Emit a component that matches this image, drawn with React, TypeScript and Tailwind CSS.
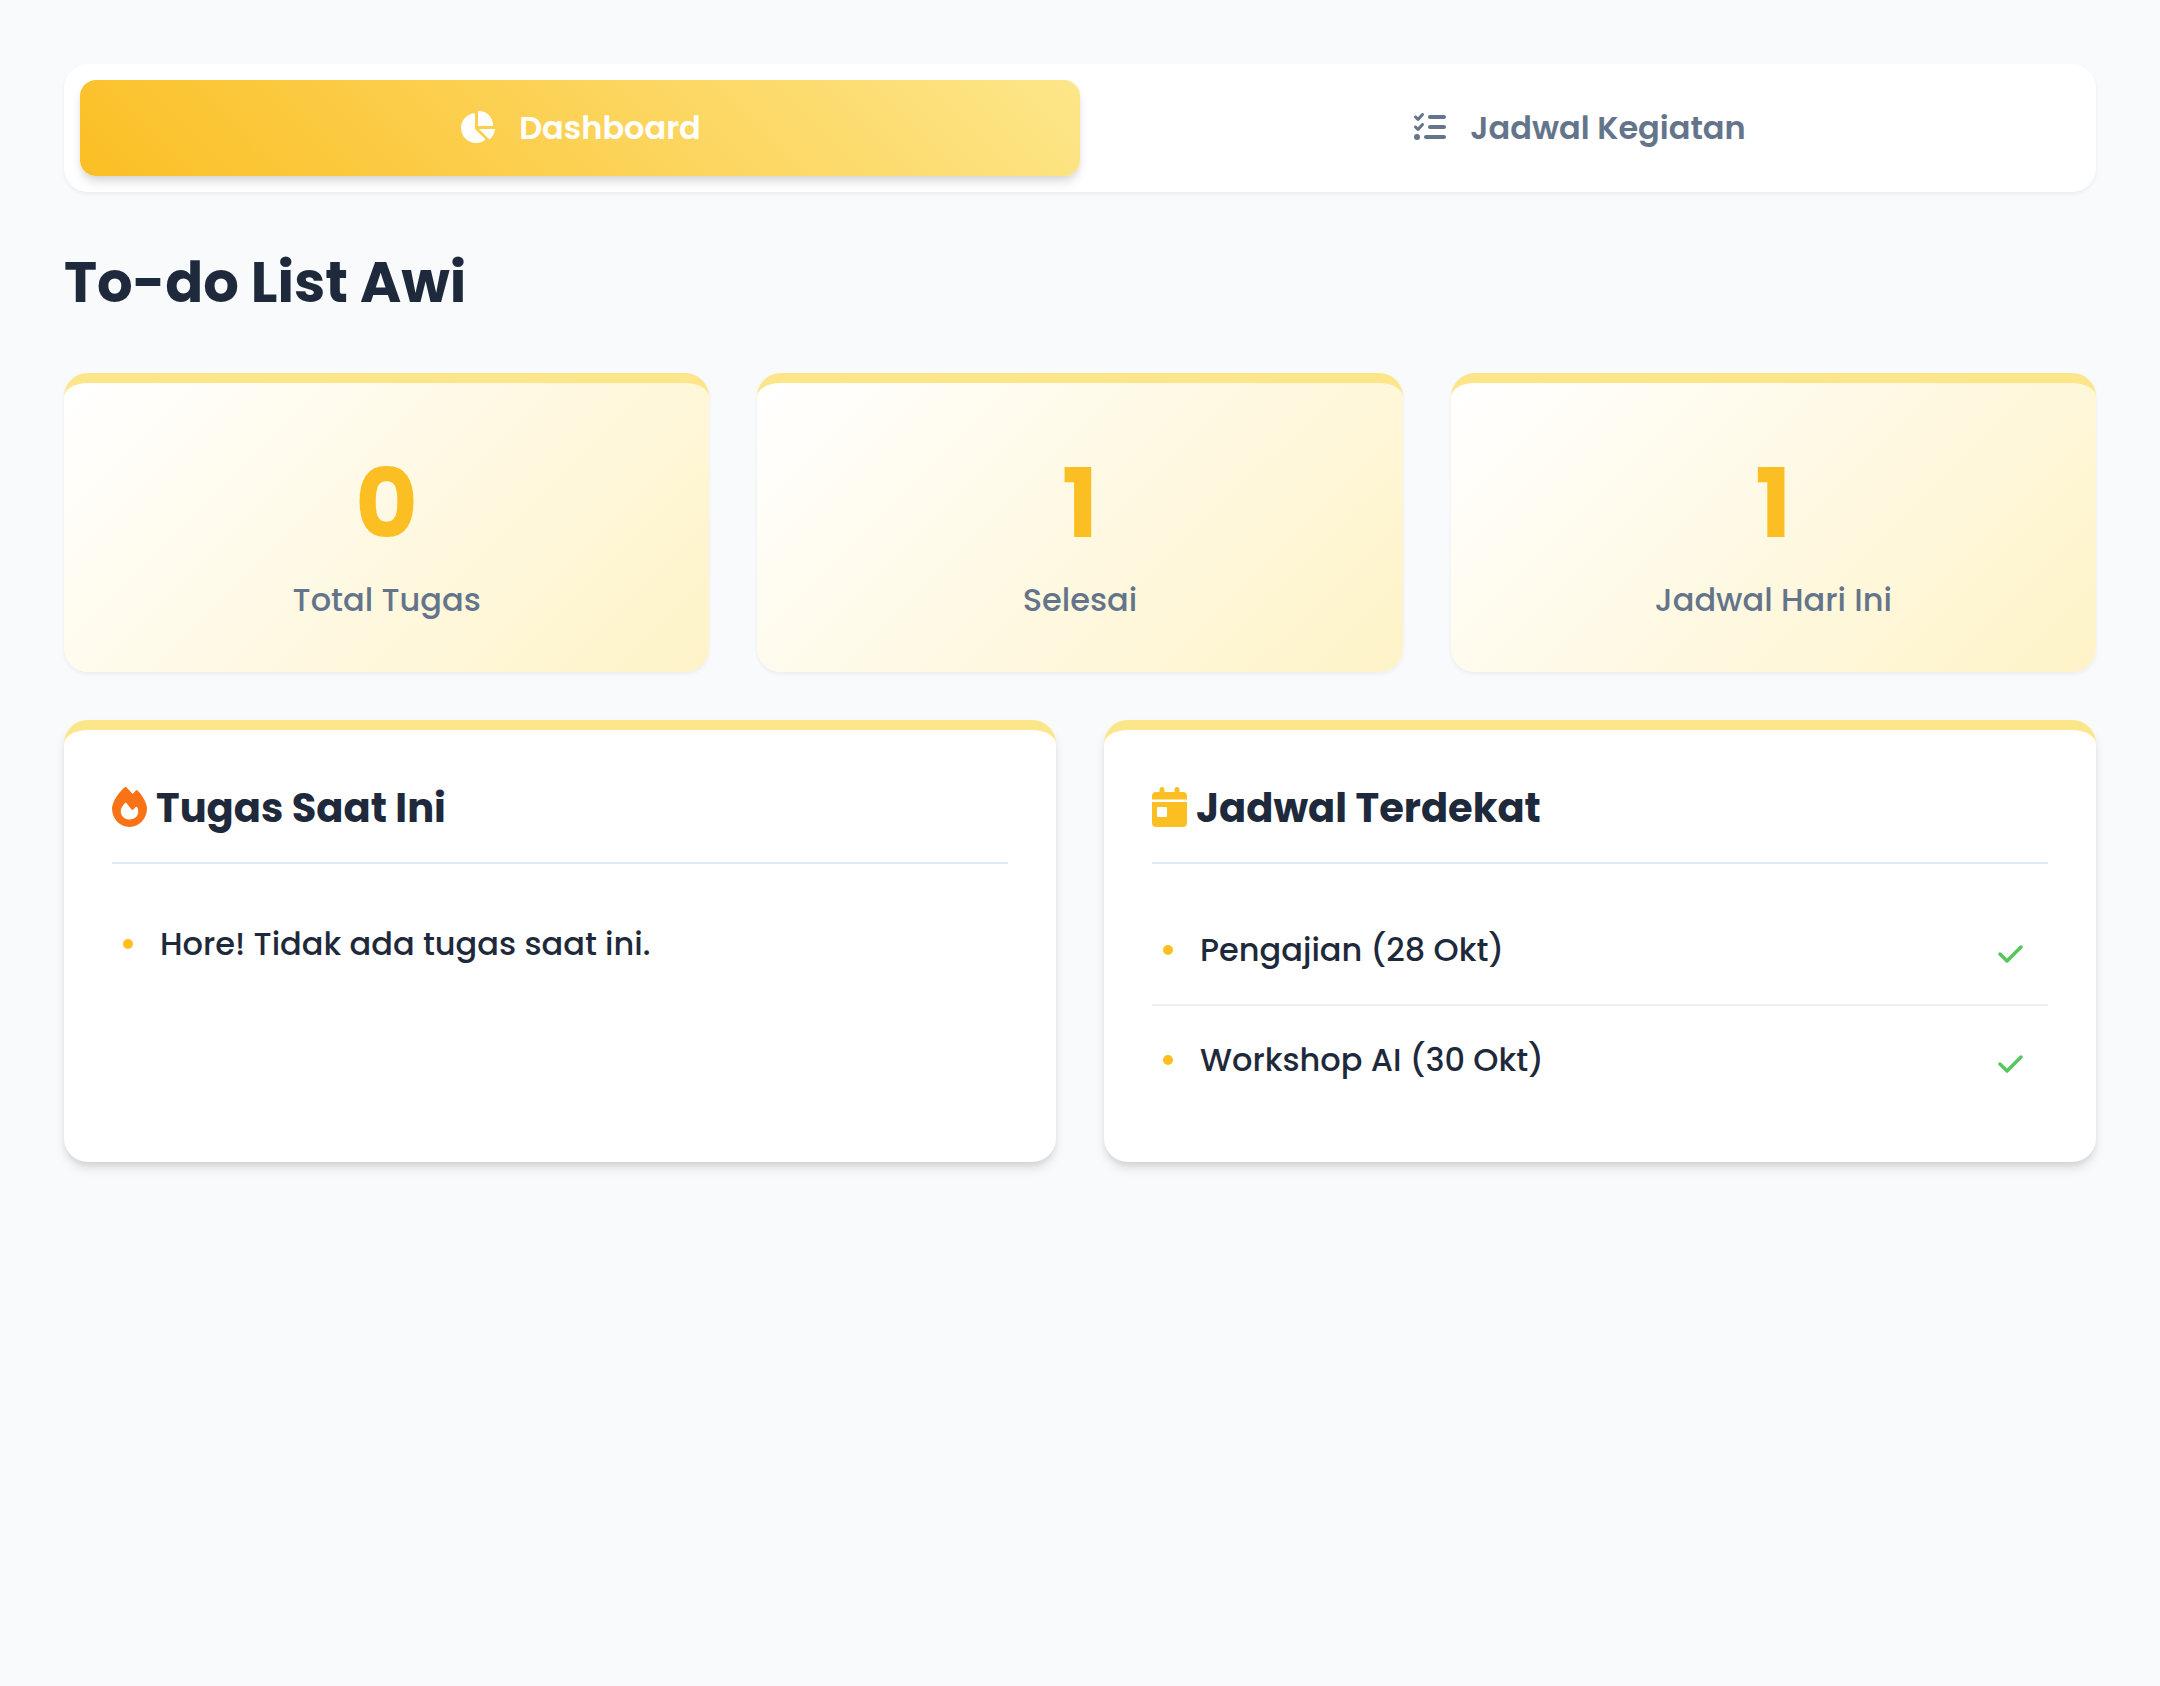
import { useState } from "react";
import type { ReactNode } from "react";
import { FaCalendarDay, FaChartPie, FaCheck, FaFire, FaListCheck } from "react-icons/fa6";

const stats = [
  { value: 0, label: "Total Tugas" },
  { value: 1, label: "Selesai" },
  { value: 1, label: "Jadwal Hari Ini" },
];

const schedule = ["Pengajian (28 Okt)", "Workshop AI (30 Okt)"];

const tabs = [
  { id: "dashboard", label: "Dashboard", icon: <FaChartPie className="mb-[3px] h-8 w-9" aria-hidden="true" /> },
  { id: "jadwal", label: "Jadwal Kegiatan", icon: <FaListCheck className="mb-[3px] size-8" aria-hidden="true" /> },
];

function Panel({ icon, title, children }: { icon: ReactNode; title: string; children: ReactNode }) {
  return (
    <section className="rounded-3xl border-t-[10px] border-[#fde58a] bg-white p-12 shadow-[0_8px_12px_-2px_rgba(0,0,0,0.1),0_4px_8px_-2px_rgba(0,0,0,0.1)]">
      <h2 className="flex items-center gap-[9px] border-b-2 border-[#e2e8f0] pb-6 text-[40px] leading-[60px] font-bold">
        {icon}
        {title}
      </h2>
      <ul className="mt-8 font-medium">{children}</ul>
    </section>
  );
}

function Bullet() {
  return <span aria-hidden="true" className="mr-[27px] ml-[11px] size-[10px] shrink-0 rounded-full bg-[#fbbf24]" />;
}

export default function App() {
  const [active, setActive] = useState("dashboard");
  return (
    <main className="min-h-screen bg-[#f9fafc] p-16 font-['Poppins','Inter',sans-serif] text-[32px] leading-[48px] text-[#1e293b]">
      <nav className="flex rounded-3xl bg-white p-4 shadow-[0_2px_4px_rgba(0,0,0,0.06)]">
        {tabs.map(({ id, label, icon }) => (
          <button
            key={id}
            type="button"
            onClick={() => setActive(id)}
            className={
              "flex flex-1 items-center justify-center gap-6 rounded-2xl py-6 font-semibold " +
              (active === id
                ? "bg-[linear-gradient(45deg,#fbbf24,#fde68a)] text-white shadow-[0_8px_12px_-2px_rgba(0,0,0,0.1),0_4px_8px_-2px_rgba(0,0,0,0.1)]"
                : "text-[#64748b]")
            }
          >
            {icon}
            {label}
          </button>
        ))}
      </nav>

      <h1 className="my-12 text-[56px] leading-[85px] font-bold">To-do List Awi</h1>

      <div className="grid grid-cols-3 gap-12">
        {stats.map(({ value, label }) => (
          <section
            key={label}
            className="rounded-3xl border-t-[10px] border-[#fde58a] bg-[linear-gradient(135deg,#ffffff,#fef3c7)] p-12 text-center shadow-[0_2px_4px_rgba(0,0,0,0.06)]"
          >
            <p className="text-[96px] leading-[145px] font-bold text-[#fbbf24]">{value}</p>
            <p className="font-medium text-[#64748b]">{label}</p>
          </section>
        ))}
      </div>

      <div className="mt-12 grid grid-cols-2 gap-12">
        <Panel
          icon={<FaFire className="mb-0.5 h-10 w-[35px] text-[#f97316]" aria-hidden="true" />}
          title="Tugas Saat Ini"
        >
          <li className="flex items-center py-6">
            <Bullet />
            Hore! Tidak ada tugas saat ini.
          </li>
        </Panel>
        <Panel
          icon={<FaCalendarDay className="mb-0.5 h-10 w-[35px] text-[#fbbf24]" aria-hidden="true" />}
          title="Jadwal Terdekat"
        >
          {schedule.map((item) => (
            <li key={item} className="flex items-center border-b-2 border-[#f0f0f0] py-[30px] last:border-b-0">
              <Bullet />
              {item}
              <button type="button" aria-label={"Tandai selesai: " + item} className="mt-2 mr-[25px] ml-auto text-[#56c75b]">
                <FaCheck className="h-7 w-[25px]" aria-hidden="true" />
              </button>
            </li>
          ))}
        </Panel>
      </div>
    </main>
  );
}
